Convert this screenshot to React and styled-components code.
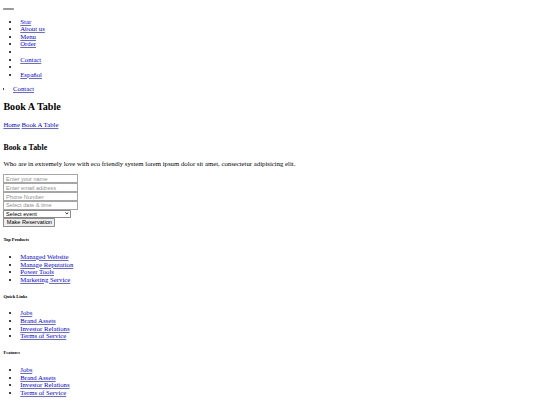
import React from "react";
import styled, { createGlobalStyle } from "styled-components";

const Global = createGlobalStyle`
  html { zoom: 0.421875; }
  body {
    margin: 8px;
    font-family: "Liberation Serif", "Times New Roman", serif;
    font-size: 16px;
    line-height: 17.94px;
    color: #000;
    background: #fff;
  }
  a {
    color: #0000ee;
    text-decoration: underline;
    text-decoration-color: rgba(0, 0, 238, 0.6);
  }
`;

const Header = styled.header`
  display: block;
  line-height: 17.94px;
`;

const Toggler = styled.button`
  appearance: none;
  display: inline-block;
  box-sizing: border-box;
  width: 24px;
  height: 6px;
  padding: 0;
  margin: 0;
  border: 1px solid #9a9a9a;
  border-radius: 2px;
  background: #efefef;
  vertical-align: baseline;
`;

const NavList = styled.ul`
  margin: 16px 0;
  padding-left: ${(p) => p.$indent || 40}px;
  list-style: disc;
`;

const NavItem = styled.li`
  line-height: 17.94px;
  min-height: 17.94px;
`;

const PageTitle = styled.h2`
  font-size: 24px;
  line-height: 27.5px;
  font-weight: bold;
  margin: 19.92px 0;
`;

const Breadcrumb = styled.div`
  padding-bottom: 16px;
`;

const SectionTitle = styled.h3`
  font-size: 18.72px;
  line-height: 21.5px;
  font-weight: bold;
  margin: 18.72px 0;
`;

const Lead = styled.p`
  margin: 16px 0;
`;

const Form = styled.form`
  display: flex;
  flex-direction: column;
  align-items: flex-start;
`;

const Field = styled.input`
  appearance: none;
  box-sizing: border-box;
  display: block;
  width: 178px;
  height: 21px;
  margin: 0;
  padding: 0 4px;
  border: 1px solid #a6a6a6;
  border-radius: 0;
  background: #fff;
  font-family: "Liberation Sans", Arial, sans-serif;
  font-size: 13.333px;
  color: #000;
  &::placeholder { color: #8f8f8f; }
`;

const SelectWrap = styled.div`
  position: relative;
  width: 161px;
  height: 19px;
`;

const EventSelect = styled.select`
  appearance: none;
  box-sizing: border-box;
  display: block;
  width: 161px;
  height: 19px;
  margin: 0;
  padding: 0 4px;
  border: 1px solid #8a8a8a;
  border-radius: 2px;
  background: #fff;
  font-family: "Liberation Sans", Arial, sans-serif;
  font-size: 13.333px;
  color: #000;
`;

const Chevron = styled.svg`
  position: absolute;
  right: 6px;
  top: 6px;
  width: 9px;
  height: 6px;
  pointer-events: none;
`;

const Submit = styled.button`
  appearance: none;
  box-sizing: border-box;
  display: block;
  width: 123px;
  height: 21px;
  margin: 0;
  padding: 0;
  border: 1px solid #8f8f8f;
  border-radius: 2px;
  background: #efefef;
  font-family: "Liberation Sans", Arial, sans-serif;
  font-size: 13.333px;
  white-space: nowrap;
  text-align: center;
  color: #000;
`;

const FooterHeading = styled.h6`
  font-size: 10.72px;
  line-height: 12.3px;
  font-weight: bold;
  margin: 24.97px 0;
`;

const FooterList = styled.ul`
  margin: 16px 0;
  padding-left: 40px;
  list-style: disc;
`;

const footer = [
  { title: "Top Products", items: ["Managed Website", "Manage Reputation", "Power Tools", "Marketing Service"] },
  { title: "Quick Links", items: ["Jobs", "Brand Assets", "Investor Relations", "Terms of Service"] },
  { title: "Features", items: ["Jobs", "Brand Assets", "Investor Relations", "Terms of Service"] },
];

export default function App() {
  return (
    <>
      <Global />
      <Header>
        <Toggler type="button" aria-label="Toggle navigation" />
        <NavList>
          <NavItem><a href="#">Star</a></NavItem>
          <NavItem><a href="#">About us</a></NavItem>
          <NavItem><a href="#">Menu</a></NavItem>
          <NavItem><a href="#">Order</a></NavItem>
          <NavItem></NavItem>
          <NavItem><a href="#">Contact</a></NavItem>
          <NavItem></NavItem>
          <NavItem><a href="#">Español</a></NavItem>
        </NavList>
        <NavList $indent={23}>
          <NavItem><a href="#">Contact</a></NavItem>
        </NavList>
      </Header>
      <main>
        <PageTitle>Book A Table</PageTitle>
        <Breadcrumb>
          <a href="#">Home</a> <a href="#">Book A Table</a>
        </Breadcrumb>
        <SectionTitle>Book a Table</SectionTitle>
        <Lead>Who are in extremely love with eco friendly system lorem ipsum dolor sit amet, consectetur adipisicing elit.</Lead>
        <Form onSubmit={(e) => e.preventDefault()}>
          <Field type="text" placeholder="Enter your name" />
          <Field type="email" placeholder="Enter email address" />
          <Field type="text" placeholder="Phone Number" />
          <Field type="text" placeholder="Select date & time" />
          <SelectWrap>
            <EventSelect defaultValue="">
              <option value="">Select event</option>
              <option>Birthday Party</option>
              <option>Anniversary</option>
            </EventSelect>
            <Chevron viewBox="0 0 9 6" aria-hidden="true">
              <path d="M1 1 L4.5 4.5 L8 1" fill="none" stroke="#000" strokeWidth="2" />
            </Chevron>
          </SelectWrap>
          <Submit type="submit">Make Reservation</Submit>
        </Form>
      </main>
      <footer>
        {footer.map((col) => (
          <div key={col.title}>
            <FooterHeading>{col.title}</FooterHeading>
            <FooterList>
              {col.items.map((it, i) => (
                <NavItem key={i}><a href="#">{it}</a></NavItem>
              ))}
            </FooterList>
          </div>
        ))}
      </footer>
    </>
  );
}
